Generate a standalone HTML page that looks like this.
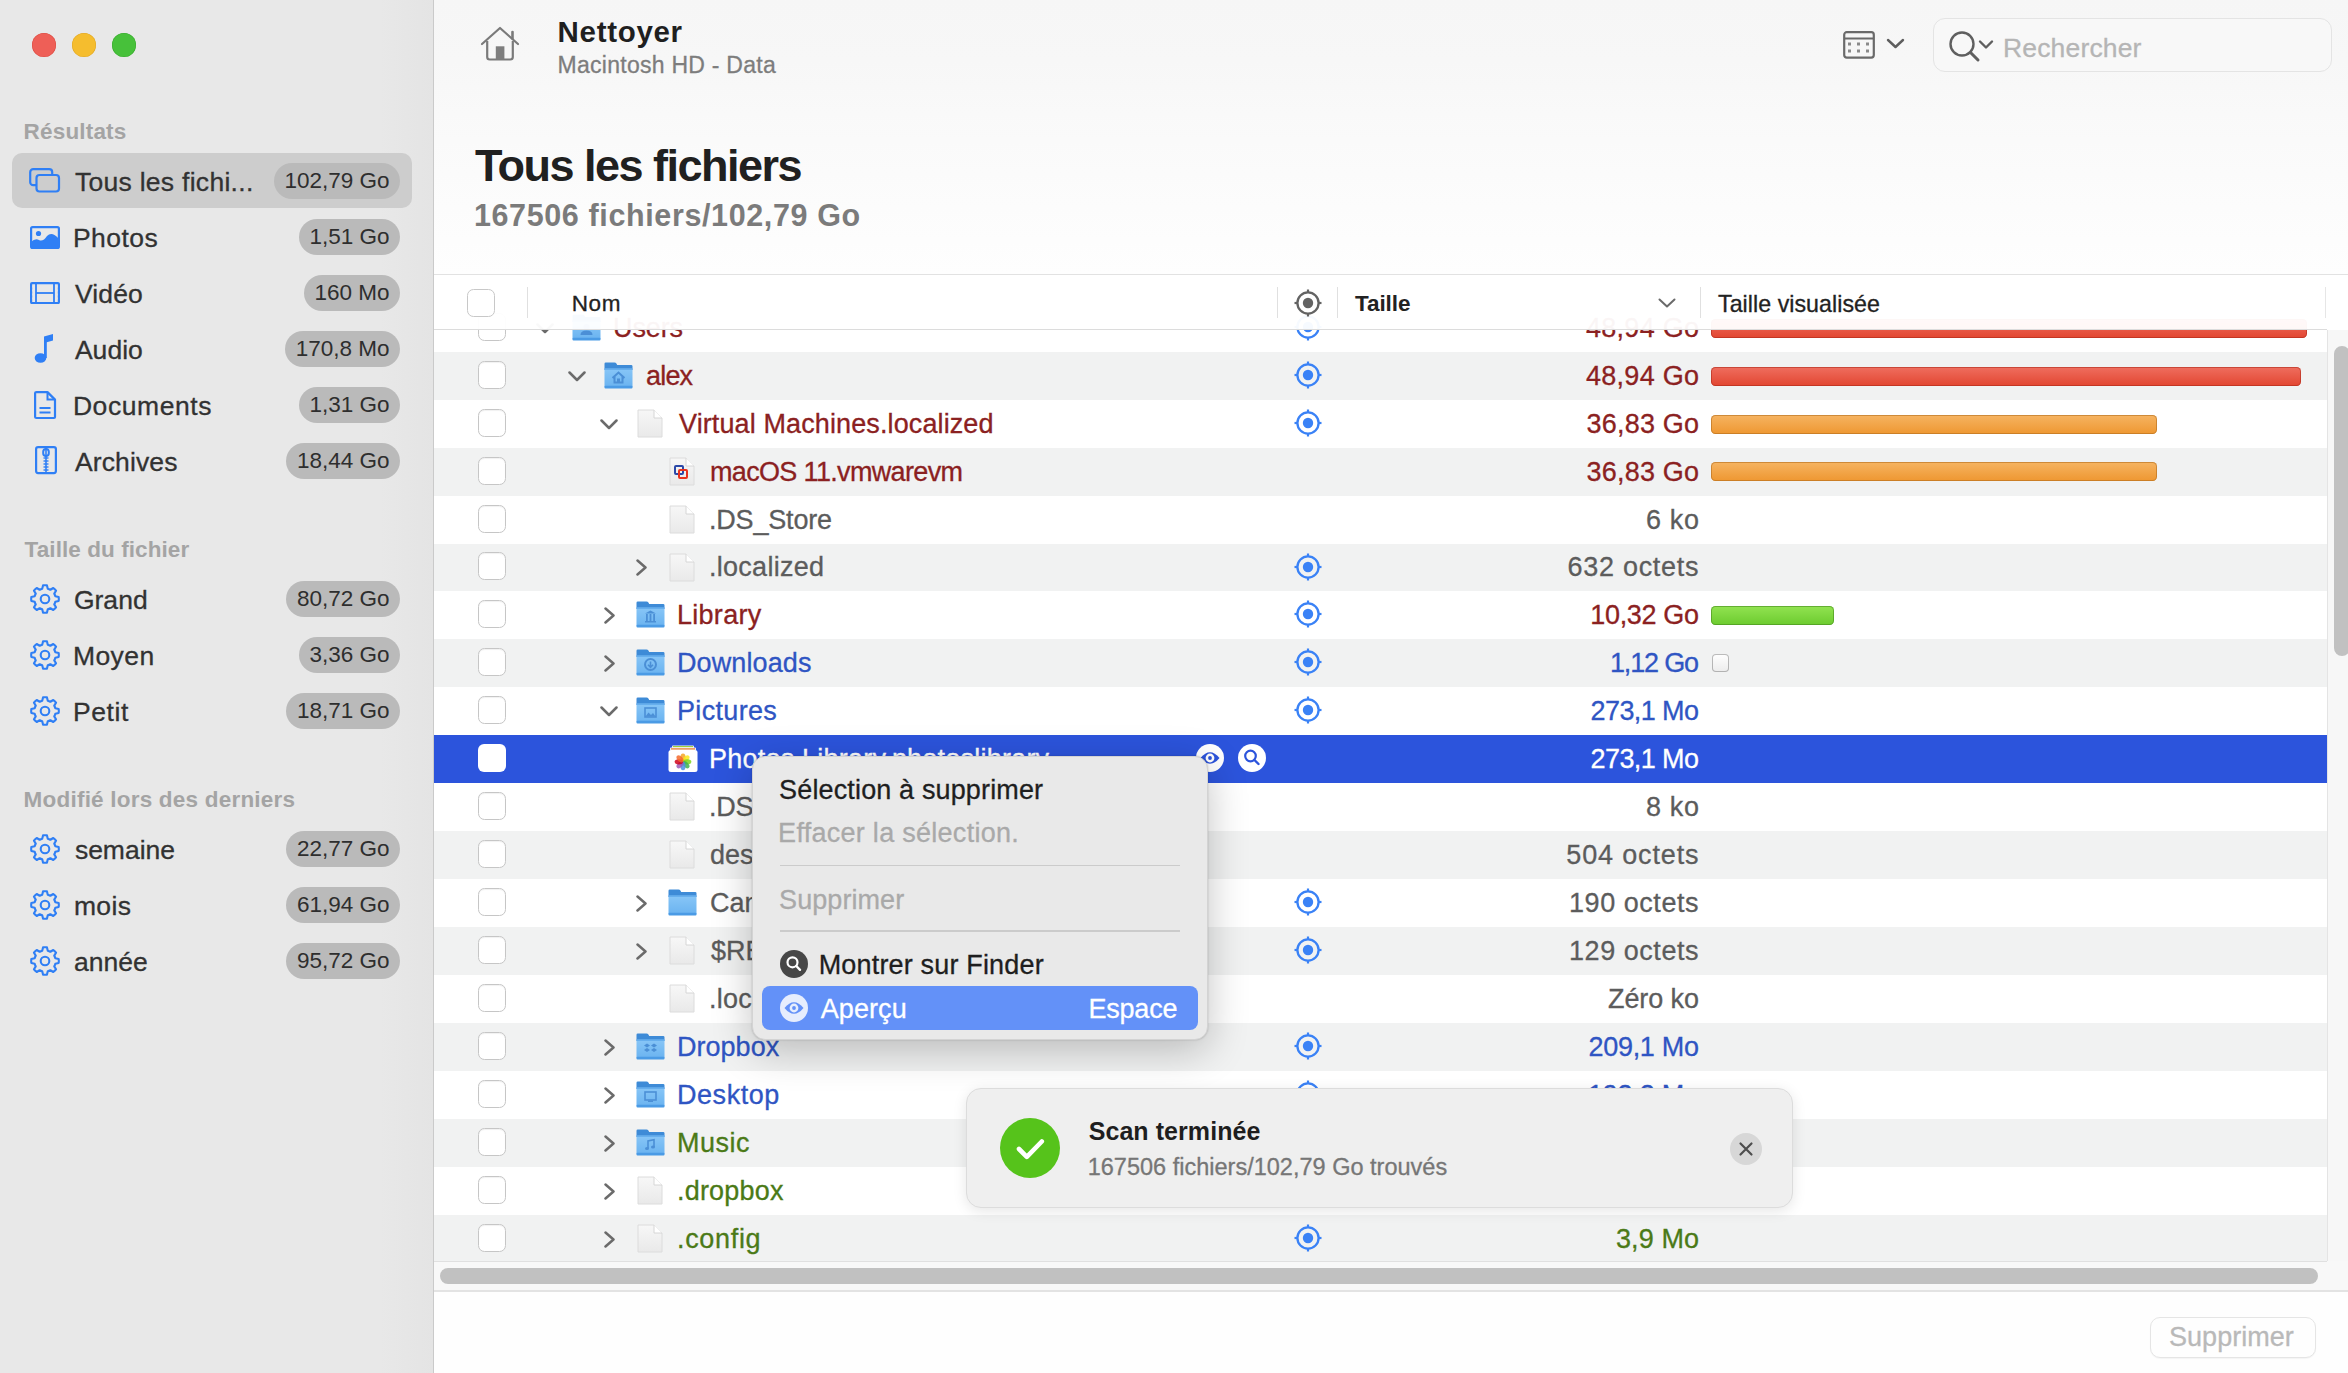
<!DOCTYPE html><html><head><meta charset="utf-8"><style>
html,body{margin:0;padding:0;}
body{width:2348px;height:1373px;overflow:hidden;position:relative;font-family:"Liberation Sans", sans-serif;background:#fff;}
.t{position:absolute;white-space:nowrap;}
</style></head><body>
<div style="position:absolute;left:0px;top:0px;width:433px;height:1373px;background:linear-gradient(to right,#e8e8e8 0,#e8e8e8 380px,#e4e4e4 433px);"></div>
<div style="position:absolute;left:433px;top:0px;width:1px;height:1373px;background:#cacaca;"></div>
<div style="position:absolute;left:32px;top:33px;width:24px;height:24px;border-radius:50%;background:#ee5f57;box-shadow:inset 0 0 0 0.5px #d9493f;"></div>
<div style="position:absolute;left:72px;top:33px;width:24px;height:24px;border-radius:50%;background:#f5bd2e;box-shadow:inset 0 0 0 0.5px #dea424;"></div>
<div style="position:absolute;left:112px;top:33px;width:24px;height:24px;border-radius:50%;background:#47c13a;box-shadow:inset 0 0 0 0.5px #36a72b;"></div>
<div class="t" style="left:23.60px;top:121.15px;font-size:22.5px;line-height:22.5px;color:#a4a4a4;font-weight:700;letter-spacing:0.179px;">Résultats</div>
<div class="t" style="left:24.60px;top:538.95px;font-size:22.5px;line-height:22.5px;color:#a4a4a4;font-weight:700;letter-spacing:0.074px;">Taille du fichier</div>
<div class="t" style="left:23.60px;top:788.85px;font-size:22.5px;line-height:22.5px;color:#a4a4a4;font-weight:700;letter-spacing:0.212px;">Modifié lors des derniers</div>
<div style="position:absolute;left:12px;top:153.4px;width:400px;height:55px;background:#cdcdcd;border-radius:10px;"></div>
<svg style="position:absolute;left:29px;top:168px;" width="32" height="25" viewBox="0 0 32 25"><rect x="1.2" y="1.2" width="22" height="16" rx="3" fill="none" stroke="#2f7ff5" stroke-width="2.2"/><rect x="7.5" y="7" width="22.5" height="16.5" rx="3" fill="#cdcdcd" stroke="#2f7ff5" stroke-width="2.2"/></svg>
<div class="t" style="left:74.90px;top:169.37px;font-size:26.5px;line-height:26.5px;color:#323232;font-weight:400;letter-spacing:0.286px;-webkit-text-stroke:0.3px #323232;">Tous les fichi...</div>
<div class="t" style="right:1948px;top:163px;height:36px;line-height:36px;padding:0 10.5px;border-radius:18px;background:#bababa;font-size:22.5px;color:#2e2e2e;">102,79 Go</div>
<svg style="position:absolute;left:30px;top:226px;" width="30" height="23" viewBox="0 0 30 23"><rect x="1.1" y="1.1" width="27.8" height="20.8" rx="1.5" fill="none" stroke="#2f7ff5" stroke-width="2.2"/><circle cx="8.5" cy="7.5" r="2.6" fill="#2f7ff5"/><path d="M1 22 L1 16 Q5 12 9 14 Q13 16 17 10 Q22 5 29 13 L29 22 Z" fill="#2f7ff5"/></svg>
<div class="t" style="left:72.90px;top:225.37px;font-size:26.5px;line-height:26.5px;color:#323232;font-weight:400;letter-spacing:0.490px;-webkit-text-stroke:0.3px #323232;">Photos</div>
<div class="t" style="right:1948px;top:219px;height:36px;line-height:36px;padding:0 10.5px;border-radius:18px;background:#bababa;font-size:22.5px;color:#2e2e2e;">1,51 Go</div>
<svg style="position:absolute;left:30px;top:282px;" width="30" height="22" viewBox="0 0 30 22"><rect x="1.1" y="1.1" width="27.8" height="20" rx="1" fill="none" stroke="#2f7ff5" stroke-width="2.2"/><line x1="6" y1="1" x2="6" y2="21" stroke="#2f7ff5" stroke-width="1.8"/><line x1="24" y1="1" x2="24" y2="21" stroke="#2f7ff5" stroke-width="1.8"/><line x1="6" y1="11" x2="24" y2="11" stroke="#2f7ff5" stroke-width="1.8"/><rect x="2.4" y="3.5" width="2.2" height="2" fill="#e8e8e8"/><rect x="25.4" y="3.5" width="2.2" height="2" fill="#e8e8e8"/><rect x="2.4" y="7.5" width="2.2" height="2" fill="#e8e8e8"/><rect x="25.4" y="7.5" width="2.2" height="2" fill="#e8e8e8"/><rect x="2.4" y="11.5" width="2.2" height="2" fill="#e8e8e8"/><rect x="25.4" y="11.5" width="2.2" height="2" fill="#e8e8e8"/><rect x="2.4" y="15.5" width="2.2" height="2" fill="#e8e8e8"/><rect x="25.4" y="15.5" width="2.2" height="2" fill="#e8e8e8"/></svg>
<div class="t" style="left:74.90px;top:281.37px;font-size:26.5px;line-height:26.5px;color:#323232;font-weight:400;letter-spacing:0.160px;-webkit-text-stroke:0.3px #323232;">Vidéo</div>
<div class="t" style="right:1948px;top:275px;height:36px;line-height:36px;padding:0 10.5px;border-radius:18px;background:#bababa;font-size:22.5px;color:#2e2e2e;">160 Mo</div>
<svg style="position:absolute;left:34px;top:334px;" width="20" height="30" viewBox="0 0 20 30"><ellipse cx="6.5" cy="24" rx="5.8" ry="4.8" fill="#2f7ff5"/><rect x="10" y="4" width="2.8" height="20" fill="#2f7ff5"/><path d="M10 2.5 L19 0 L19 6.5 L10 9 Z" fill="#2f7ff5"/></svg>
<div class="t" style="left:74.90px;top:337.37px;font-size:26.5px;line-height:26.5px;color:#323232;font-weight:400;letter-spacing:0.040px;-webkit-text-stroke:0.3px #323232;">Audio</div>
<div class="t" style="right:1948px;top:331px;height:36px;line-height:36px;padding:0 10.5px;border-radius:18px;background:#bababa;font-size:22.5px;color:#2e2e2e;">170,8 Mo</div>
<svg style="position:absolute;left:33.5px;top:391px;" width="23" height="29" viewBox="0 0 23 29"><path d="M2.5 1.1 H13.5 L21 8.6 V26 Q21 27 20 27 H2.5 Q1.1 27 1.1 26 V2.1 Q1.1 1.1 2.5 1.1 Z" fill="none" stroke="#2f7ff5" stroke-width="2.2" stroke-linejoin="round"/><path d="M13.5 1.1 V8.6 H21" fill="none" stroke="#2f7ff5" stroke-width="2"/><line x1="5.5" y1="17" x2="16.5" y2="17" stroke="#2f7ff5" stroke-width="2"/><line x1="5.5" y1="21.5" x2="16.5" y2="21.5" stroke="#2f7ff5" stroke-width="2"/></svg>
<div class="t" style="left:72.90px;top:393.37px;font-size:26.5px;line-height:26.5px;color:#323232;font-weight:400;letter-spacing:0.578px;-webkit-text-stroke:0.3px #323232;">Documents</div>
<div class="t" style="right:1948px;top:387px;height:36px;line-height:36px;padding:0 10.5px;border-radius:18px;background:#bababa;font-size:22.5px;color:#2e2e2e;">1,31 Go</div>
<svg style="position:absolute;left:34.5px;top:446px;" width="22" height="29" viewBox="0 0 22 29"><rect x="1.1" y="1.1" width="19.8" height="26" rx="2" fill="none" stroke="#2f7ff5" stroke-width="2.2"/><line x1="11" y1="1" x2="11" y2="26" stroke="#2f7ff5" stroke-width="1.6"/><line x1="8.5" y1="12" x2="13.5" y2="12" stroke="#2f7ff5" stroke-width="1.4"/><line x1="8.5" y1="15" x2="13.5" y2="15" stroke="#2f7ff5" stroke-width="1.4"/><line x1="8.5" y1="18" x2="13.5" y2="18" stroke="#2f7ff5" stroke-width="1.4"/><line x1="8.5" y1="21" x2="13.5" y2="21" stroke="#2f7ff5" stroke-width="1.4"/><line x1="8.5" y1="24" x2="13.5" y2="24" stroke="#2f7ff5" stroke-width="1.4"/><rect x="8.2" y="3" width="5.6" height="7" rx="2.8" fill="none" stroke="#2f7ff5" stroke-width="2"/></svg>
<div class="t" style="left:74.90px;top:449.37px;font-size:26.5px;line-height:26.5px;color:#323232;font-weight:400;letter-spacing:0.134px;-webkit-text-stroke:0.3px #323232;">Archives</div>
<div class="t" style="right:1948px;top:443px;height:36px;line-height:36px;padding:0 10.5px;border-radius:18px;background:#bababa;font-size:22.5px;color:#2e2e2e;">18,44 Go</div>
<svg style="position:absolute;left:30px;top:583.8px;" width="30" height="30" viewBox="0 0 30 30"><path d="M12.23 4.66 L13.08 1.33 A13.8 13.8 0 0 1 16.92 1.33 L17.77 4.66 A10.7 10.7 0 0 1 20.35 5.73 L23.31 3.98 A13.8 13.8 0 0 1 26.02 6.69 L24.27 9.65 A10.7 10.7 0 0 1 25.34 12.23 L28.67 13.08 A13.8 13.8 0 0 1 28.67 16.92 L25.34 17.77 A10.7 10.7 0 0 1 24.27 20.35 L26.02 23.31 A13.8 13.8 0 0 1 23.31 26.02 L20.35 24.27 A10.7 10.7 0 0 1 17.77 25.34 L16.92 28.67 A13.8 13.8 0 0 1 13.08 28.67 L12.23 25.34 A10.7 10.7 0 0 1 9.65 24.27 L6.69 26.02 A13.8 13.8 0 0 1 3.98 23.31 L5.73 20.35 A10.7 10.7 0 0 1 4.66 17.77 L1.33 16.92 A13.8 13.8 0 0 1 1.33 13.08 L4.66 12.23 A10.7 10.7 0 0 1 5.73 9.65 L3.98 6.69 A13.8 13.8 0 0 1 6.69 3.98 L9.65 5.73 A10.7 10.7 0 0 1 12.23 4.66 Z" fill="none" stroke="#2f7ff5" stroke-width="2.1" stroke-linejoin="round"/><circle cx="15" cy="15" r="4.3" fill="none" stroke="#2f7ff5" stroke-width="2.1"/></svg>
<div class="t" style="left:73.90px;top:587.37px;font-size:26.5px;line-height:26.5px;color:#323232;font-weight:400;letter-spacing:0.022px;-webkit-text-stroke:0.3px #323232;">Grand</div>
<div class="t" style="right:1948px;top:581px;height:36px;line-height:36px;padding:0 10.5px;border-radius:18px;background:#bababa;font-size:22.5px;color:#2e2e2e;">80,72 Go</div>
<svg style="position:absolute;left:30px;top:639.8px;" width="30" height="30" viewBox="0 0 30 30"><path d="M12.23 4.66 L13.08 1.33 A13.8 13.8 0 0 1 16.92 1.33 L17.77 4.66 A10.7 10.7 0 0 1 20.35 5.73 L23.31 3.98 A13.8 13.8 0 0 1 26.02 6.69 L24.27 9.65 A10.7 10.7 0 0 1 25.34 12.23 L28.67 13.08 A13.8 13.8 0 0 1 28.67 16.92 L25.34 17.77 A10.7 10.7 0 0 1 24.27 20.35 L26.02 23.31 A13.8 13.8 0 0 1 23.31 26.02 L20.35 24.27 A10.7 10.7 0 0 1 17.77 25.34 L16.92 28.67 A13.8 13.8 0 0 1 13.08 28.67 L12.23 25.34 A10.7 10.7 0 0 1 9.65 24.27 L6.69 26.02 A13.8 13.8 0 0 1 3.98 23.31 L5.73 20.35 A10.7 10.7 0 0 1 4.66 17.77 L1.33 16.92 A13.8 13.8 0 0 1 1.33 13.08 L4.66 12.23 A10.7 10.7 0 0 1 5.73 9.65 L3.98 6.69 A13.8 13.8 0 0 1 6.69 3.98 L9.65 5.73 A10.7 10.7 0 0 1 12.23 4.66 Z" fill="none" stroke="#2f7ff5" stroke-width="2.1" stroke-linejoin="round"/><circle cx="15" cy="15" r="4.3" fill="none" stroke="#2f7ff5" stroke-width="2.1"/></svg>
<div class="t" style="left:72.90px;top:643.37px;font-size:26.5px;line-height:26.5px;color:#323232;font-weight:400;letter-spacing:0.450px;-webkit-text-stroke:0.3px #323232;">Moyen</div>
<div class="t" style="right:1948px;top:637px;height:36px;line-height:36px;padding:0 10.5px;border-radius:18px;background:#bababa;font-size:22.5px;color:#2e2e2e;">3,36 Go</div>
<svg style="position:absolute;left:30px;top:695.8px;" width="30" height="30" viewBox="0 0 30 30"><path d="M12.23 4.66 L13.08 1.33 A13.8 13.8 0 0 1 16.92 1.33 L17.77 4.66 A10.7 10.7 0 0 1 20.35 5.73 L23.31 3.98 A13.8 13.8 0 0 1 26.02 6.69 L24.27 9.65 A10.7 10.7 0 0 1 25.34 12.23 L28.67 13.08 A13.8 13.8 0 0 1 28.67 16.92 L25.34 17.77 A10.7 10.7 0 0 1 24.27 20.35 L26.02 23.31 A13.8 13.8 0 0 1 23.31 26.02 L20.35 24.27 A10.7 10.7 0 0 1 17.77 25.34 L16.92 28.67 A13.8 13.8 0 0 1 13.08 28.67 L12.23 25.34 A10.7 10.7 0 0 1 9.65 24.27 L6.69 26.02 A13.8 13.8 0 0 1 3.98 23.31 L5.73 20.35 A10.7 10.7 0 0 1 4.66 17.77 L1.33 16.92 A13.8 13.8 0 0 1 1.33 13.08 L4.66 12.23 A10.7 10.7 0 0 1 5.73 9.65 L3.98 6.69 A13.8 13.8 0 0 1 6.69 3.98 L9.65 5.73 A10.7 10.7 0 0 1 12.23 4.66 Z" fill="none" stroke="#2f7ff5" stroke-width="2.1" stroke-linejoin="round"/><circle cx="15" cy="15" r="4.3" fill="none" stroke="#2f7ff5" stroke-width="2.1"/></svg>
<div class="t" style="left:72.90px;top:699.37px;font-size:26.5px;line-height:26.5px;color:#323232;font-weight:400;letter-spacing:0.584px;-webkit-text-stroke:0.3px #323232;">Petit</div>
<div class="t" style="right:1948px;top:693px;height:36px;line-height:36px;padding:0 10.5px;border-radius:18px;background:#bababa;font-size:22.5px;color:#2e2e2e;">18,71 Go</div>
<svg style="position:absolute;left:30px;top:833.8px;" width="30" height="30" viewBox="0 0 30 30"><path d="M12.23 4.66 L13.08 1.33 A13.8 13.8 0 0 1 16.92 1.33 L17.77 4.66 A10.7 10.7 0 0 1 20.35 5.73 L23.31 3.98 A13.8 13.8 0 0 1 26.02 6.69 L24.27 9.65 A10.7 10.7 0 0 1 25.34 12.23 L28.67 13.08 A13.8 13.8 0 0 1 28.67 16.92 L25.34 17.77 A10.7 10.7 0 0 1 24.27 20.35 L26.02 23.31 A13.8 13.8 0 0 1 23.31 26.02 L20.35 24.27 A10.7 10.7 0 0 1 17.77 25.34 L16.92 28.67 A13.8 13.8 0 0 1 13.08 28.67 L12.23 25.34 A10.7 10.7 0 0 1 9.65 24.27 L6.69 26.02 A13.8 13.8 0 0 1 3.98 23.31 L5.73 20.35 A10.7 10.7 0 0 1 4.66 17.77 L1.33 16.92 A13.8 13.8 0 0 1 1.33 13.08 L4.66 12.23 A10.7 10.7 0 0 1 5.73 9.65 L3.98 6.69 A13.8 13.8 0 0 1 6.69 3.98 L9.65 5.73 A10.7 10.7 0 0 1 12.23 4.66 Z" fill="none" stroke="#2f7ff5" stroke-width="2.1" stroke-linejoin="round"/><circle cx="15" cy="15" r="4.3" fill="none" stroke="#2f7ff5" stroke-width="2.1"/></svg>
<div class="t" style="left:74.90px;top:837.37px;font-size:26.5px;line-height:26.5px;color:#323232;font-weight:400;letter-spacing:-0.004px;-webkit-text-stroke:0.3px #323232;">semaine</div>
<div class="t" style="right:1948px;top:831px;height:36px;line-height:36px;padding:0 10.5px;border-radius:18px;background:#bababa;font-size:22.5px;color:#2e2e2e;">22,77 Go</div>
<svg style="position:absolute;left:30px;top:889.8px;" width="30" height="30" viewBox="0 0 30 30"><path d="M12.23 4.66 L13.08 1.33 A13.8 13.8 0 0 1 16.92 1.33 L17.77 4.66 A10.7 10.7 0 0 1 20.35 5.73 L23.31 3.98 A13.8 13.8 0 0 1 26.02 6.69 L24.27 9.65 A10.7 10.7 0 0 1 25.34 12.23 L28.67 13.08 A13.8 13.8 0 0 1 28.67 16.92 L25.34 17.77 A10.7 10.7 0 0 1 24.27 20.35 L26.02 23.31 A13.8 13.8 0 0 1 23.31 26.02 L20.35 24.27 A10.7 10.7 0 0 1 17.77 25.34 L16.92 28.67 A13.8 13.8 0 0 1 13.08 28.67 L12.23 25.34 A10.7 10.7 0 0 1 9.65 24.27 L6.69 26.02 A13.8 13.8 0 0 1 3.98 23.31 L5.73 20.35 A10.7 10.7 0 0 1 4.66 17.77 L1.33 16.92 A13.8 13.8 0 0 1 1.33 13.08 L4.66 12.23 A10.7 10.7 0 0 1 5.73 9.65 L3.98 6.69 A13.8 13.8 0 0 1 6.69 3.98 L9.65 5.73 A10.7 10.7 0 0 1 12.23 4.66 Z" fill="none" stroke="#2f7ff5" stroke-width="2.1" stroke-linejoin="round"/><circle cx="15" cy="15" r="4.3" fill="none" stroke="#2f7ff5" stroke-width="2.1"/></svg>
<div class="t" style="left:73.90px;top:893.37px;font-size:26.5px;line-height:26.5px;color:#323232;font-weight:400;letter-spacing:0.400px;-webkit-text-stroke:0.3px #323232;">mois</div>
<div class="t" style="right:1948px;top:887px;height:36px;line-height:36px;padding:0 10.5px;border-radius:18px;background:#bababa;font-size:22.5px;color:#2e2e2e;">61,94 Go</div>
<svg style="position:absolute;left:30px;top:945.8px;" width="30" height="30" viewBox="0 0 30 30"><path d="M12.23 4.66 L13.08 1.33 A13.8 13.8 0 0 1 16.92 1.33 L17.77 4.66 A10.7 10.7 0 0 1 20.35 5.73 L23.31 3.98 A13.8 13.8 0 0 1 26.02 6.69 L24.27 9.65 A10.7 10.7 0 0 1 25.34 12.23 L28.67 13.08 A13.8 13.8 0 0 1 28.67 16.92 L25.34 17.77 A10.7 10.7 0 0 1 24.27 20.35 L26.02 23.31 A13.8 13.8 0 0 1 23.31 26.02 L20.35 24.27 A10.7 10.7 0 0 1 17.77 25.34 L16.92 28.67 A13.8 13.8 0 0 1 13.08 28.67 L12.23 25.34 A10.7 10.7 0 0 1 9.65 24.27 L6.69 26.02 A13.8 13.8 0 0 1 3.98 23.31 L5.73 20.35 A10.7 10.7 0 0 1 4.66 17.77 L1.33 16.92 A13.8 13.8 0 0 1 1.33 13.08 L4.66 12.23 A10.7 10.7 0 0 1 5.73 9.65 L3.98 6.69 A13.8 13.8 0 0 1 6.69 3.98 L9.65 5.73 A10.7 10.7 0 0 1 12.23 4.66 Z" fill="none" stroke="#2f7ff5" stroke-width="2.1" stroke-linejoin="round"/><circle cx="15" cy="15" r="4.3" fill="none" stroke="#2f7ff5" stroke-width="2.1"/></svg>
<div class="t" style="left:73.90px;top:949.37px;font-size:26.5px;line-height:26.5px;color:#323232;font-weight:400;letter-spacing:0.012px;-webkit-text-stroke:0.3px #323232;">année</div>
<div class="t" style="right:1948px;top:943px;height:36px;line-height:36px;padding:0 10.5px;border-radius:18px;background:#bababa;font-size:22.5px;color:#2e2e2e;">95,72 Go</div>
<div style="position:absolute;left:434px;top:0px;width:1914px;height:274px;background:linear-gradient(to bottom,#f6f6f6 0,#f7f7f7 60px,#fafafa 140px,#fefefe 274px);"></div>
<svg style="position:absolute;left:478px;top:24px;" width="44" height="40" viewBox="0 0 44 40"><path d="M4 20 L22 4 L40 20" fill="none" stroke="#7a7a7a" stroke-width="2.2" stroke-linecap="round" stroke-linejoin="round"/><path d="M34.5 14.5 V8" stroke="#7a7a7a" stroke-width="2.6" stroke-linecap="round"/><path d="M9.2 17 V33 Q9.2 35.5 11.7 35.5 H32.3 Q34.8 35.5 34.8 33 V17" fill="none" stroke="#7a7a7a" stroke-width="2.2" stroke-linejoin="round"/><rect x="17.8" y="22.3" width="8.6" height="13.2" fill="#7e7e7e"/></svg>
<div class="t" style="left:557.60px;top:17.33px;font-size:29.5px;line-height:29.5px;color:#1f1f1f;font-weight:700;letter-spacing:0.687px;">Nettoyer</div>
<div class="t" style="left:557.60px;top:54.33px;font-size:23px;line-height:23px;color:#7d7d7d;font-weight:400;letter-spacing:0.257px;-webkit-text-stroke:0.3px #7d7d7d;">Macintosh HD - Data</div>
<svg style="position:absolute;left:1843px;top:31px;" width="34" height="28" viewBox="0 0 34 28"><rect x="1.2" y="1.2" width="29.6" height="25.4" rx="2.5" fill="none" stroke="#6a6a6a" stroke-width="2.2"/><line x1="1" y1="7.5" x2="31" y2="7.5" stroke="#6a6a6a" stroke-width="2"/><rect x="5" y="11.5" width="3" height="3" fill="#8a8a8a"/><rect x="5" y="18.5" width="3" height="3" fill="#8a8a8a"/><rect x="14" y="11.5" width="3" height="3" fill="#8a8a8a"/><rect x="14" y="18.5" width="3" height="3" fill="#8a8a8a"/><rect x="23" y="11.5" width="3" height="3" fill="#8a8a8a"/><rect x="23" y="18.5" width="3" height="3" fill="#8a8a8a"/></svg>
<svg style="position:absolute;left:1886px;top:38px;" width="20" height="12" viewBox="0 0 20 12"><path d="M2 2 L9.5 9 L17 2" fill="none" stroke="#5e5e5e" stroke-width="2.4" stroke-linecap="round" stroke-linejoin="round"/></svg>
<div style="position:absolute;left:1932.5px;top:17.5px;width:399px;height:54.5px;box-sizing:border-box;border:1.5px solid #e4e4e4;border-radius:12px;background:#f8f8f8;"></div>
<svg style="position:absolute;left:1946px;top:29px;" width="50" height="34" viewBox="0 0 50 34"><circle cx="16" cy="15" r="11.5" fill="none" stroke="#5f5f5f" stroke-width="2.4"/><line x1="24.5" y1="23.5" x2="32" y2="31" stroke="#5f5f5f" stroke-width="3" stroke-linecap="round"/><path d="M34 12.5 L40 18.5 L46 12.5" fill="none" stroke="#5f5f5f" stroke-width="2.4" stroke-linecap="round" stroke-linejoin="round"/></svg>
<div class="t" style="left:2003.00px;top:35.37px;font-size:26.5px;line-height:26.5px;color:#b5b5b5;font-weight:400;letter-spacing:0.161px;-webkit-text-stroke:0.3px #b5b5b5;">Rechercher</div>
<div class="t" style="left:474.90px;top:142.51px;font-size:45px;line-height:45px;color:#202020;font-weight:700;letter-spacing:-1.516px;">Tous les fichiers</div>
<div class="t" style="left:473.90px;top:199.68px;font-size:30.5px;line-height:30.5px;color:#7b7b7b;font-weight:700;letter-spacing:0.625px;">167506 fichiers/102,79 Go</div>
<div style="position:absolute;left:434px;top:275px;width:1893px;height:986px;overflow:hidden;">
<div style="position:absolute;left:0px;top:29.30000000000001px;width:1893px;height:48.09999999999998px;background:#ffffff;"></div>
<div style="position:absolute;left:44px;top:38.0px;width:28px;height:28px;box-sizing:border-box;border:1.2px solid #c6c6c6;border-radius:6.5px;background:#fff;box-shadow:inset 0 1px 1px rgba(0,0,0,0.06);"></div>
<svg style="position:absolute;left:101.5px;top:47.80000000000001px;" width="18" height="11" viewBox="0 0 18 11"><path d="M1.5 1.5 L9 9 L16.5 1.5" fill="none" stroke="#6b6b6b" stroke-width="2.5" stroke-linecap="round" stroke-linejoin="round"/></svg>
<svg style="position:absolute;left:138px;top:39.0px;" width="29" height="27" viewBox="0 0 29 27"><defs><linearGradient id="fg1" x1="0" y1="0" x2="0" y2="1"><stop offset="0" stop-color="#88c6f7"/><stop offset="1" stop-color="#6ab3f0"/></linearGradient></defs><path d="M0.5 4 V1.8 Q0.5 0.5 1.8 0.5 H10.5 Q11.8 0.5 12.4 1.6 L13.2 3 H27.2 Q28.5 3 28.5 4.3 V8 H0.5 Z" fill="#3e8bd7"/><rect x="0.5" y="6.5" width="28" height="19" rx="1" fill="url(#fg1)"/><rect x="0.5" y="6.5" width="28" height="1.2" fill="#5aa5ea"/><rect x="0.5" y="23.8" width="28" height="2.7" rx="1" fill="#4b9be5"/><circle cx="14.5" cy="13" r="3" fill="#4b8fd6"/><path d="M8.5 21 Q8.5 16.5 14.5 16.5 Q20.5 16.5 20.5 21 Z" fill="#4b8fd6"/></svg>
<div class="t" style="left:179.00px;top:40.04px;font-size:27px;line-height:27px;color:#8b2121;font-weight:400;letter-spacing:-0.101px;-webkit-text-stroke:0.3px #8b2121;">Users</div>
<svg style="position:absolute;left:858.7px;top:37.10000000000002px;" width="30" height="30" viewBox="0 0 30 30"><circle cx="15" cy="15" r="10.6" fill="none" stroke="#3a82f6" stroke-width="2.3"/><circle cx="15" cy="15" r="5.2" fill="#3a82f6"/><line x1="15" y1="1.5" x2="15" y2="4.5" stroke="#3a82f6" stroke-width="2.2"/><line x1="15" y1="25.5" x2="15" y2="28.5" stroke="#3a82f6" stroke-width="2.2"/><line x1="1.5" y1="15" x2="4.5" y2="15" stroke="#3a82f6" stroke-width="2.2"/><line x1="25.5" y1="15" x2="28.5" y2="15" stroke="#3a82f6" stroke-width="2.2"/></svg>
<div class="t" style="right:627.71px;text-align:right;top:40.04px;font-size:27px;line-height:27px;color:#8b2121;font-weight:400;letter-spacing:0.276px;-webkit-text-stroke:0.3px #8b2121;">48,94 Go</div>
<div style="position:absolute;left:1277px;top:43.69999999999999px;width:596px;height:19px;border-radius:4.5px;background:linear-gradient(to bottom,#ef6e5f,#e24631);box-shadow:inset 0 0 0 1px rgba(170,40,25,0.55);"></div>
<div style="position:absolute;left:0px;top:77.19999999999999px;width:1893px;height:48.13333333333334px;background:#f1f2f2;"></div>
<div style="position:absolute;left:44px;top:85.89999999999998px;width:28px;height:28px;box-sizing:border-box;border:1.2px solid #c6c6c6;border-radius:6.5px;background:#fff;box-shadow:inset 0 1px 1px rgba(0,0,0,0.06);"></div>
<svg style="position:absolute;left:133.5px;top:95.69999999999999px;" width="18" height="11" viewBox="0 0 18 11"><path d="M1.5 1.5 L9 9 L16.5 1.5" fill="none" stroke="#6b6b6b" stroke-width="2.5" stroke-linecap="round" stroke-linejoin="round"/></svg>
<svg style="position:absolute;left:170px;top:86.89999999999998px;" width="29" height="27" viewBox="0 0 29 27"><defs><linearGradient id="fg2" x1="0" y1="0" x2="0" y2="1"><stop offset="0" stop-color="#88c6f7"/><stop offset="1" stop-color="#6ab3f0"/></linearGradient></defs><path d="M0.5 4 V1.8 Q0.5 0.5 1.8 0.5 H10.5 Q11.8 0.5 12.4 1.6 L13.2 3 H27.2 Q28.5 3 28.5 4.3 V8 H0.5 Z" fill="#3e8bd7"/><rect x="0.5" y="6.5" width="28" height="19" rx="1" fill="url(#fg2)"/><rect x="0.5" y="6.5" width="28" height="1.2" fill="#5aa5ea"/><rect x="0.5" y="23.8" width="28" height="2.7" rx="1" fill="#4b9be5"/><path d="M8.5 16 L14.5 10.5 L20.5 16 M10.5 14.5 V20.5 H18.5 V14.5" fill="none" stroke="#4b8fd6" stroke-width="2"/><rect x="13" y="16.5" width="3" height="4" fill="#4b8fd6"/></svg>
<div class="t" style="left:212.00px;top:87.94px;font-size:27px;line-height:27px;color:#8b2121;font-weight:400;letter-spacing:-0.810px;-webkit-text-stroke:0.3px #8b2121;">alex</div>
<svg style="position:absolute;left:858.7px;top:85.0px;" width="30" height="30" viewBox="0 0 30 30"><circle cx="15" cy="15" r="10.6" fill="none" stroke="#3a82f6" stroke-width="2.3"/><circle cx="15" cy="15" r="5.2" fill="#3a82f6"/><line x1="15" y1="1.5" x2="15" y2="4.5" stroke="#3a82f6" stroke-width="2.2"/><line x1="15" y1="25.5" x2="15" y2="28.5" stroke="#3a82f6" stroke-width="2.2"/><line x1="1.5" y1="15" x2="4.5" y2="15" stroke="#3a82f6" stroke-width="2.2"/><line x1="25.5" y1="15" x2="28.5" y2="15" stroke="#3a82f6" stroke-width="2.2"/></svg>
<div class="t" style="right:627.71px;text-align:right;top:87.94px;font-size:27px;line-height:27px;color:#8b2121;font-weight:400;letter-spacing:0.276px;-webkit-text-stroke:0.3px #8b2121;">48,94 Go</div>
<div style="position:absolute;left:1277px;top:91.59999999999997px;width:590px;height:19px;border-radius:4.5px;background:linear-gradient(to bottom,#ef6e5f,#e24631);box-shadow:inset 0 0 0 1px rgba(170,40,25,0.55);"></div>
<div style="position:absolute;left:0px;top:125.13333333333333px;width:1893px;height:48.13333333333334px;background:#ffffff;"></div>
<div style="position:absolute;left:44px;top:133.83333333333331px;width:28px;height:28px;box-sizing:border-box;border:1.2px solid #c6c6c6;border-radius:6.5px;background:#fff;box-shadow:inset 0 1px 1px rgba(0,0,0,0.06);"></div>
<svg style="position:absolute;left:165.5px;top:143.63333333333333px;" width="18" height="11" viewBox="0 0 18 11"><path d="M1.5 1.5 L9 9 L16.5 1.5" fill="none" stroke="#6b6b6b" stroke-width="2.5" stroke-linecap="round" stroke-linejoin="round"/></svg>
<svg style="position:absolute;left:203px;top:134.0333333333333px;" width="26" height="29" viewBox="0 0 26 29"><defs><linearGradient id="dg" x1="0" y1="0" x2="0" y2="1"><stop offset="0" stop-color="#f7f7f7"/><stop offset="1" stop-color="#e9e9e9"/></linearGradient></defs><path d="M1 1 H17 L25 9 V28 H1 Z" fill="url(#dg)" stroke="#dcdcdc" stroke-width="1"/><path d="M17 1 V9 H25" fill="#ffffff" stroke="#d6d6d6" stroke-width="1"/></svg>
<div class="t" style="left:245.00px;top:135.88px;font-size:27px;line-height:27px;color:#8b2121;font-weight:400;letter-spacing:0.114px;-webkit-text-stroke:0.3px #8b2121;">Virtual Machines.localized</div>
<svg style="position:absolute;left:858.7px;top:132.93333333333334px;" width="30" height="30" viewBox="0 0 30 30"><circle cx="15" cy="15" r="10.6" fill="none" stroke="#3a82f6" stroke-width="2.3"/><circle cx="15" cy="15" r="5.2" fill="#3a82f6"/><line x1="15" y1="1.5" x2="15" y2="4.5" stroke="#3a82f6" stroke-width="2.2"/><line x1="15" y1="25.5" x2="15" y2="28.5" stroke="#3a82f6" stroke-width="2.2"/><line x1="1.5" y1="15" x2="4.5" y2="15" stroke="#3a82f6" stroke-width="2.2"/><line x1="25.5" y1="15" x2="28.5" y2="15" stroke="#3a82f6" stroke-width="2.2"/></svg>
<div class="t" style="right:627.78px;text-align:right;top:135.88px;font-size:27px;line-height:27px;color:#8b2121;font-weight:400;letter-spacing:0.204px;-webkit-text-stroke:0.3px #8b2121;">36,83 Go</div>
<div style="position:absolute;left:1277px;top:139.5333333333333px;width:446px;height:19px;border-radius:4.5px;background:linear-gradient(to bottom,#f6b462,#ee9731);box-shadow:inset 0 0 0 1px rgba(180,110,30,0.6);"></div>
<div style="position:absolute;left:0px;top:173.06666666666666px;width:1893px;height:48.13333333333334px;background:#f1f2f2;"></div>
<div style="position:absolute;left:44px;top:181.76666666666665px;width:28px;height:28px;box-sizing:border-box;border:1.2px solid #c6c6c6;border-radius:6.5px;background:#fff;box-shadow:inset 0 1px 1px rgba(0,0,0,0.06);"></div>
<svg style="position:absolute;left:235px;top:181.96666666666664px;" width="26" height="29" viewBox="0 0 26 29"><defs><linearGradient id="dg" x1="0" y1="0" x2="0" y2="1"><stop offset="0" stop-color="#f7f7f7"/><stop offset="1" stop-color="#e9e9e9"/></linearGradient></defs><path d="M1 1 H17 L25 9 V28 H1 Z" fill="url(#dg)" stroke="#dcdcdc" stroke-width="1"/><path d="M17 1 V9 H25" fill="#ffffff" stroke="#d6d6d6" stroke-width="1"/><rect x="6" y="9" width="8" height="8" rx="1" fill="none" stroke="#2b48a8" stroke-width="2"/><rect x="10" y="13" width="8" height="8" rx="1" fill="none" stroke="#e8321e" stroke-width="2"/></svg>
<div class="t" style="left:276.00px;top:183.81px;font-size:27px;line-height:27px;color:#8b2121;font-weight:400;letter-spacing:-0.660px;-webkit-text-stroke:0.3px #8b2121;">macOS 11.vmwarevm</div>
<div class="t" style="right:627.78px;text-align:right;top:183.81px;font-size:27px;line-height:27px;color:#8b2121;font-weight:400;letter-spacing:0.204px;-webkit-text-stroke:0.3px #8b2121;">36,83 Go</div>
<div style="position:absolute;left:1277px;top:187.46666666666664px;width:446px;height:19px;border-radius:4.5px;background:linear-gradient(to bottom,#f6b462,#ee9731);box-shadow:inset 0 0 0 1px rgba(180,110,30,0.6);"></div>
<div style="position:absolute;left:0px;top:221.0px;width:1893px;height:47.925000000000026px;background:#ffffff;"></div>
<div style="position:absolute;left:44px;top:229.7px;width:28px;height:28px;box-sizing:border-box;border:1.2px solid #c6c6c6;border-radius:6.5px;background:#fff;box-shadow:inset 0 1px 1px rgba(0,0,0,0.06);"></div>
<svg style="position:absolute;left:235px;top:229.89999999999998px;" width="26" height="29" viewBox="0 0 26 29"><defs><linearGradient id="dg" x1="0" y1="0" x2="0" y2="1"><stop offset="0" stop-color="#f7f7f7"/><stop offset="1" stop-color="#e9e9e9"/></linearGradient></defs><path d="M1 1 H17 L25 9 V28 H1 Z" fill="url(#dg)" stroke="#dcdcdc" stroke-width="1"/><path d="M17 1 V9 H25" fill="#ffffff" stroke="#d6d6d6" stroke-width="1"/></svg>
<div class="t" style="left:275.00px;top:231.74px;font-size:27px;line-height:27px;color:#5c5c5c;font-weight:400;letter-spacing:-0.193px;-webkit-text-stroke:0.3px #5c5c5c;">.DS_Store</div>
<div class="t" style="right:627.32px;text-align:right;top:231.74px;font-size:27px;line-height:27px;color:#5c5c5c;font-weight:400;letter-spacing:0.661px;-webkit-text-stroke:0.3px #5c5c5c;">6 ko</div>
<div style="position:absolute;left:0px;top:268.725px;width:1893px;height:47.925000000000026px;background:#f1f2f2;"></div>
<div style="position:absolute;left:44px;top:277.42500000000007px;width:28px;height:28px;box-sizing:border-box;border:1.2px solid #c6c6c6;border-radius:6.5px;background:#fff;box-shadow:inset 0 1px 1px rgba(0,0,0,0.06);"></div>
<svg style="position:absolute;left:202px;top:284.225px;" width="12" height="18" viewBox="0 0 12 18"><path d="M1.5 1.5 L9.5 8.5 L1.5 15.5" fill="none" stroke="#6b6b6b" stroke-width="2.5" stroke-linecap="round" stroke-linejoin="round"/></svg>
<svg style="position:absolute;left:235px;top:277.625px;" width="26" height="29" viewBox="0 0 26 29"><defs><linearGradient id="dg" x1="0" y1="0" x2="0" y2="1"><stop offset="0" stop-color="#f7f7f7"/><stop offset="1" stop-color="#e9e9e9"/></linearGradient></defs><path d="M1 1 H17 L25 9 V28 H1 Z" fill="url(#dg)" stroke="#dcdcdc" stroke-width="1"/><path d="M17 1 V9 H25" fill="#ffffff" stroke="#d6d6d6" stroke-width="1"/></svg>
<div class="t" style="left:275.00px;top:279.47px;font-size:27px;line-height:27px;color:#5c5c5c;font-weight:400;letter-spacing:0.273px;-webkit-text-stroke:0.3px #5c5c5c;">.localized</div>
<svg style="position:absolute;left:858.7px;top:276.525px;" width="30" height="30" viewBox="0 0 30 30"><circle cx="15" cy="15" r="10.6" fill="none" stroke="#3a82f6" stroke-width="2.3"/><circle cx="15" cy="15" r="5.2" fill="#3a82f6"/><line x1="15" y1="1.5" x2="15" y2="4.5" stroke="#3a82f6" stroke-width="2.2"/><line x1="15" y1="25.5" x2="15" y2="28.5" stroke="#3a82f6" stroke-width="2.2"/><line x1="1.5" y1="15" x2="4.5" y2="15" stroke="#3a82f6" stroke-width="2.2"/><line x1="25.5" y1="15" x2="28.5" y2="15" stroke="#3a82f6" stroke-width="2.2"/></svg>
<div class="t" style="right:627.79px;text-align:right;top:279.47px;font-size:27px;line-height:27px;color:#5c5c5c;font-weight:400;letter-spacing:0.713px;-webkit-text-stroke:0.3px #5c5c5c;">632 octets</div>
<div style="position:absolute;left:0px;top:316.45000000000005px;width:1893px;height:48.075px;background:#ffffff;"></div>
<div style="position:absolute;left:44px;top:325.1500000000001px;width:28px;height:28px;box-sizing:border-box;border:1.2px solid #c6c6c6;border-radius:6.5px;background:#fff;box-shadow:inset 0 1px 1px rgba(0,0,0,0.06);"></div>
<svg style="position:absolute;left:170px;top:331.95000000000005px;" width="12" height="18" viewBox="0 0 12 18"><path d="M1.5 1.5 L9.5 8.5 L1.5 15.5" fill="none" stroke="#6b6b6b" stroke-width="2.5" stroke-linecap="round" stroke-linejoin="round"/></svg>
<svg style="position:absolute;left:202px;top:326.1500000000001px;" width="29" height="27" viewBox="0 0 29 27"><defs><linearGradient id="fg3" x1="0" y1="0" x2="0" y2="1"><stop offset="0" stop-color="#88c6f7"/><stop offset="1" stop-color="#6ab3f0"/></linearGradient></defs><path d="M0.5 4 V1.8 Q0.5 0.5 1.8 0.5 H10.5 Q11.8 0.5 12.4 1.6 L13.2 3 H27.2 Q28.5 3 28.5 4.3 V8 H0.5 Z" fill="#3e8bd7"/><rect x="0.5" y="6.5" width="28" height="19" rx="1" fill="url(#fg3)"/><rect x="0.5" y="6.5" width="28" height="1.2" fill="#5aa5ea"/><rect x="0.5" y="23.8" width="28" height="2.7" rx="1" fill="#4b9be5"/><path d="M9 12.5 L14.5 9.5 L20 12.5 Z" fill="#4b8fd6"/><rect x="10" y="13" width="1.8" height="7" fill="#4b8fd6"/><rect x="13.6" y="13" width="1.8" height="7" fill="#4b8fd6"/><rect x="17.2" y="13" width="1.8" height="7" fill="#4b8fd6"/><rect x="9" y="20" width="11" height="1.5" fill="#4b8fd6"/></svg>
<div class="t" style="left:243.00px;top:327.19px;font-size:27px;line-height:27px;color:#8b2121;font-weight:400;letter-spacing:0.278px;-webkit-text-stroke:0.3px #8b2121;">Library</div>
<svg style="position:absolute;left:858.7px;top:324.25px;" width="30" height="30" viewBox="0 0 30 30"><circle cx="15" cy="15" r="10.6" fill="none" stroke="#3a82f6" stroke-width="2.3"/><circle cx="15" cy="15" r="5.2" fill="#3a82f6"/><line x1="15" y1="1.5" x2="15" y2="4.5" stroke="#3a82f6" stroke-width="2.2"/><line x1="15" y1="25.5" x2="15" y2="28.5" stroke="#3a82f6" stroke-width="2.2"/><line x1="1.5" y1="15" x2="4.5" y2="15" stroke="#3a82f6" stroke-width="2.2"/><line x1="25.5" y1="15" x2="28.5" y2="15" stroke="#3a82f6" stroke-width="2.2"/></svg>
<div class="t" style="right:628.32px;text-align:right;top:327.19px;font-size:27px;line-height:27px;color:#8b2121;font-weight:400;letter-spacing:-0.338px;-webkit-text-stroke:0.3px #8b2121;">10,32 Go</div>
<div style="position:absolute;left:1277px;top:330.85px;width:123px;height:19px;border-radius:4.5px;background:linear-gradient(to bottom,#92e351,#6ccb2f);box-shadow:inset 0 0 0 1px rgba(70,140,30,0.6);"></div>
<div style="position:absolute;left:0px;top:364.32500000000005px;width:1893px;height:48.075px;background:#f1f2f2;"></div>
<div style="position:absolute;left:44px;top:373.0250000000001px;width:28px;height:28px;box-sizing:border-box;border:1.2px solid #c6c6c6;border-radius:6.5px;background:#fff;box-shadow:inset 0 1px 1px rgba(0,0,0,0.06);"></div>
<svg style="position:absolute;left:170px;top:379.82500000000005px;" width="12" height="18" viewBox="0 0 12 18"><path d="M1.5 1.5 L9.5 8.5 L1.5 15.5" fill="none" stroke="#6b6b6b" stroke-width="2.5" stroke-linecap="round" stroke-linejoin="round"/></svg>
<svg style="position:absolute;left:202px;top:374.0250000000001px;" width="29" height="27" viewBox="0 0 29 27"><defs><linearGradient id="fg4" x1="0" y1="0" x2="0" y2="1"><stop offset="0" stop-color="#88c6f7"/><stop offset="1" stop-color="#6ab3f0"/></linearGradient></defs><path d="M0.5 4 V1.8 Q0.5 0.5 1.8 0.5 H10.5 Q11.8 0.5 12.4 1.6 L13.2 3 H27.2 Q28.5 3 28.5 4.3 V8 H0.5 Z" fill="#3e8bd7"/><rect x="0.5" y="6.5" width="28" height="19" rx="1" fill="url(#fg4)"/><rect x="0.5" y="6.5" width="28" height="1.2" fill="#5aa5ea"/><rect x="0.5" y="23.8" width="28" height="2.7" rx="1" fill="#4b9be5"/><circle cx="14.5" cy="15.5" r="5.5" fill="none" stroke="#4b8fd6" stroke-width="2"/><path d="M14.5 12.5 V18 M12 15.8 L14.5 18.3 L17 15.8" fill="none" stroke="#4b8fd6" stroke-width="1.6"/></svg>
<div class="t" style="left:243.00px;top:375.07px;font-size:27px;line-height:27px;color:#2f55c3;font-weight:400;letter-spacing:0.115px;-webkit-text-stroke:0.3px #2f55c3;">Downloads</div>
<svg style="position:absolute;left:858.7px;top:372.125px;" width="30" height="30" viewBox="0 0 30 30"><circle cx="15" cy="15" r="10.6" fill="none" stroke="#3a82f6" stroke-width="2.3"/><circle cx="15" cy="15" r="5.2" fill="#3a82f6"/><line x1="15" y1="1.5" x2="15" y2="4.5" stroke="#3a82f6" stroke-width="2.2"/><line x1="15" y1="25.5" x2="15" y2="28.5" stroke="#3a82f6" stroke-width="2.2"/><line x1="1.5" y1="15" x2="4.5" y2="15" stroke="#3a82f6" stroke-width="2.2"/><line x1="25.5" y1="15" x2="28.5" y2="15" stroke="#3a82f6" stroke-width="2.2"/></svg>
<div class="t" style="right:629.16px;text-align:right;top:375.07px;font-size:27px;line-height:27px;color:#2f55c3;font-weight:400;letter-spacing:-1.175px;-webkit-text-stroke:0.3px #2f55c3;">1,12 Go</div>
<div style="position:absolute;left:1277.5px;top:379.32500000000005px;width:17.5px;height:18px;border-radius:4px;background:linear-gradient(to bottom,#ffffff,#ececec);box-shadow:inset 0 0 0 1px rgba(120,120,120,0.5);"></div>
<div style="position:absolute;left:0px;top:412.20000000000005px;width:1893px;height:47.99999999999996px;background:#ffffff;"></div>
<div style="position:absolute;left:44px;top:420.9000000000001px;width:28px;height:28px;box-sizing:border-box;border:1.2px solid #c6c6c6;border-radius:6.5px;background:#fff;box-shadow:inset 0 1px 1px rgba(0,0,0,0.06);"></div>
<svg style="position:absolute;left:165.5px;top:430.70000000000005px;" width="18" height="11" viewBox="0 0 18 11"><path d="M1.5 1.5 L9 9 L16.5 1.5" fill="none" stroke="#6b6b6b" stroke-width="2.5" stroke-linecap="round" stroke-linejoin="round"/></svg>
<svg style="position:absolute;left:202px;top:421.9000000000001px;" width="29" height="27" viewBox="0 0 29 27"><defs><linearGradient id="fg5" x1="0" y1="0" x2="0" y2="1"><stop offset="0" stop-color="#88c6f7"/><stop offset="1" stop-color="#6ab3f0"/></linearGradient></defs><path d="M0.5 4 V1.8 Q0.5 0.5 1.8 0.5 H10.5 Q11.8 0.5 12.4 1.6 L13.2 3 H27.2 Q28.5 3 28.5 4.3 V8 H0.5 Z" fill="#3e8bd7"/><rect x="0.5" y="6.5" width="28" height="19" rx="1" fill="url(#fg5)"/><rect x="0.5" y="6.5" width="28" height="1.2" fill="#5aa5ea"/><rect x="0.5" y="23.8" width="28" height="2.7" rx="1" fill="#4b9be5"/><rect x="9" y="11" width="11" height="9" fill="none" stroke="#4b8fd6" stroke-width="1.6"/><path d="M9.5 19.5 L12.5 15.5 L15 18 L17 16 L19.5 19.5 Z" fill="#4b8fd6"/></svg>
<div class="t" style="left:243.00px;top:422.94px;font-size:27px;line-height:27px;color:#2f55c3;font-weight:400;letter-spacing:0.324px;-webkit-text-stroke:0.3px #2f55c3;">Pictures</div>
<svg style="position:absolute;left:858.7px;top:420.0px;" width="30" height="30" viewBox="0 0 30 30"><circle cx="15" cy="15" r="10.6" fill="none" stroke="#3a82f6" stroke-width="2.3"/><circle cx="15" cy="15" r="5.2" fill="#3a82f6"/><line x1="15" y1="1.5" x2="15" y2="4.5" stroke="#3a82f6" stroke-width="2.2"/><line x1="15" y1="25.5" x2="15" y2="28.5" stroke="#3a82f6" stroke-width="2.2"/><line x1="1.5" y1="15" x2="4.5" y2="15" stroke="#3a82f6" stroke-width="2.2"/><line x1="25.5" y1="15" x2="28.5" y2="15" stroke="#3a82f6" stroke-width="2.2"/></svg>
<div class="t" style="right:628.58px;text-align:right;top:422.94px;font-size:27px;line-height:27px;color:#2f55c3;font-weight:400;letter-spacing:-0.594px;-webkit-text-stroke:0.3px #2f55c3;">273,1 Mo</div>
<div style="position:absolute;left:0px;top:460.0px;width:1893px;height:48.24999999999996px;background:#2c54dc;"></div>
<div style="position:absolute;left:44px;top:468.70000000000005px;width:28px;height:28px;box-sizing:border-box;border-radius:6px;background:#fff;"></div>
<svg style="position:absolute;left:234px;top:470.0px;" width="30" height="28" viewBox="0 0 30 28"><rect x="4" y="0.5" width="22" height="3" rx="1" fill="#f0f0f0"/><rect x="5" y="1" width="20" height="1.2" fill="#9fcf3a"/><rect x="2" y="2.5" width="26" height="3" rx="1" fill="#f5f5f5"/><rect x="3" y="3.3" width="24" height="1.2" fill="#e8782a"/><rect x="0.5" y="5" width="29" height="22" rx="2.5" fill="#ffffff"/><ellipse cx="15" cy="12.6" rx="2.6" ry="4.2" fill="#f5a623" opacity="0.85" transform="rotate(0 15 16.8)"/><ellipse cx="15" cy="12.6" rx="2.6" ry="4.2" fill="#f8e71c" opacity="0.85" transform="rotate(45 15 16.8)"/><ellipse cx="15" cy="12.6" rx="2.6" ry="4.2" fill="#7ed321" opacity="0.85" transform="rotate(90 15 16.8)"/><ellipse cx="15" cy="12.6" rx="2.6" ry="4.2" fill="#3fb34f" opacity="0.85" transform="rotate(135 15 16.8)"/><ellipse cx="15" cy="12.6" rx="2.6" ry="4.2" fill="#4a90e2" opacity="0.85" transform="rotate(180 15 16.8)"/><ellipse cx="15" cy="12.6" rx="2.6" ry="4.2" fill="#9b59b6" opacity="0.85" transform="rotate(225 15 16.8)"/><ellipse cx="15" cy="12.6" rx="2.6" ry="4.2" fill="#d0021b" opacity="0.85" transform="rotate(270 15 16.8)"/><ellipse cx="15" cy="12.6" rx="2.6" ry="4.2" fill="#f56a2a" opacity="0.85" transform="rotate(315 15 16.8)"/></svg>
<div class="t" style="left:275.00px;top:470.74px;font-size:27px;line-height:27px;color:#ffffff;font-weight:400;letter-spacing:0.220px;-webkit-text-stroke:0.3px #ffffff;">Photos Library.photoslibrary</div>
<div class="t" style="right:628.58px;text-align:right;top:470.74px;font-size:27px;line-height:27px;color:#ffffff;font-weight:400;letter-spacing:-0.594px;-webkit-text-stroke:0.3px #ffffff;">273,1 Mo</div>
<svg style="position:absolute;left:762px;top:469px;" width="28" height="28" viewBox="0 0 28 28"><circle cx="14" cy="14" r="14" fill="#fff"/><path d="M4.5 14 Q14 2.5 23.5 14 Q14 25.5 4.5 14 Z" fill="#2c54dc"/><circle cx="14" cy="14" r="4.4" fill="#fff"/><circle cx="14" cy="14" r="1.9" fill="#2c54dc"/></svg>
<svg style="position:absolute;left:804px;top:469px;" width="28" height="28" viewBox="0 0 28 28"><circle cx="14" cy="14" r="14" fill="#fff"/><circle cx="12.5" cy="12" r="5.3" fill="none" stroke="#2c54dc" stroke-width="2.2"/><line x1="16.5" y1="16" x2="20.5" y2="20" stroke="#2c54dc" stroke-width="2.4" stroke-linecap="round"/></svg>
<div style="position:absolute;left:0px;top:508.04999999999995px;width:1893px;height:48.25000000000007px;background:#ffffff;"></div>
<div style="position:absolute;left:44px;top:516.75px;width:28px;height:28px;box-sizing:border-box;border:1.2px solid #c6c6c6;border-radius:6.5px;background:#fff;box-shadow:inset 0 1px 1px rgba(0,0,0,0.06);"></div>
<svg style="position:absolute;left:235px;top:516.9499999999999px;" width="26" height="29" viewBox="0 0 26 29"><defs><linearGradient id="dg" x1="0" y1="0" x2="0" y2="1"><stop offset="0" stop-color="#f7f7f7"/><stop offset="1" stop-color="#e9e9e9"/></linearGradient></defs><path d="M1 1 H17 L25 9 V28 H1 Z" fill="url(#dg)" stroke="#dcdcdc" stroke-width="1"/><path d="M17 1 V9 H25" fill="#ffffff" stroke="#d6d6d6" stroke-width="1"/></svg>
<div class="t" style="left:275.00px;top:518.79px;font-size:27px;line-height:27px;color:#5c5c5c;font-weight:400;letter-spacing:-0.193px;-webkit-text-stroke:0.3px #5c5c5c;">.DS_Store</div>
<div class="t" style="right:627.32px;text-align:right;top:518.79px;font-size:27px;line-height:27px;color:#5c5c5c;font-weight:400;letter-spacing:0.661px;-webkit-text-stroke:0.3px #5c5c5c;">8 ko</div>
<div style="position:absolute;left:0px;top:556.1px;width:1893px;height:48.24999999999996px;background:#f1f2f2;"></div>
<div style="position:absolute;left:44px;top:564.8000000000001px;width:28px;height:28px;box-sizing:border-box;border:1.2px solid #c6c6c6;border-radius:6.5px;background:#fff;box-shadow:inset 0 1px 1px rgba(0,0,0,0.06);"></div>
<svg style="position:absolute;left:235px;top:565.0px;" width="26" height="29" viewBox="0 0 26 29"><defs><linearGradient id="dg" x1="0" y1="0" x2="0" y2="1"><stop offset="0" stop-color="#f7f7f7"/><stop offset="1" stop-color="#e9e9e9"/></linearGradient></defs><path d="M1 1 H17 L25 9 V28 H1 Z" fill="url(#dg)" stroke="#dcdcdc" stroke-width="1"/><path d="M17 1 V9 H25" fill="#ffffff" stroke="#d6d6d6" stroke-width="1"/></svg>
<div class="t" style="left:276.00px;top:566.84px;font-size:27px;line-height:27px;color:#5c5c5c;font-weight:400;-webkit-text-stroke:0.3px #5c5c5c;">desktop.ini</div>
<div class="t" style="right:627.65px;text-align:right;top:566.84px;font-size:27px;line-height:27px;color:#5c5c5c;font-weight:400;letter-spacing:0.846px;-webkit-text-stroke:0.3px #5c5c5c;">504 octets</div>
<div style="position:absolute;left:0px;top:604.15px;width:1893px;height:48.24999999999996px;background:#ffffff;"></div>
<div style="position:absolute;left:44px;top:612.85px;width:28px;height:28px;box-sizing:border-box;border:1.2px solid #c6c6c6;border-radius:6.5px;background:#fff;box-shadow:inset 0 1px 1px rgba(0,0,0,0.06);"></div>
<svg style="position:absolute;left:202px;top:619.65px;" width="12" height="18" viewBox="0 0 12 18"><path d="M1.5 1.5 L9.5 8.5 L1.5 15.5" fill="none" stroke="#6b6b6b" stroke-width="2.5" stroke-linecap="round" stroke-linejoin="round"/></svg>
<svg style="position:absolute;left:234px;top:613.85px;" width="29" height="27" viewBox="0 0 29 27"><defs><linearGradient id="fg6" x1="0" y1="0" x2="0" y2="1"><stop offset="0" stop-color="#88c6f7"/><stop offset="1" stop-color="#6ab3f0"/></linearGradient></defs><path d="M0.5 4 V1.8 Q0.5 0.5 1.8 0.5 H10.5 Q11.8 0.5 12.4 1.6 L13.2 3 H27.2 Q28.5 3 28.5 4.3 V8 H0.5 Z" fill="#3e8bd7"/><rect x="0.5" y="6.5" width="28" height="19" rx="1" fill="url(#fg6)"/><rect x="0.5" y="6.5" width="28" height="1.2" fill="#5aa5ea"/><rect x="0.5" y="23.8" width="28" height="2.7" rx="1" fill="#4b9be5"/></svg>
<div class="t" style="left:276.00px;top:614.89px;font-size:27px;line-height:27px;color:#5c5c5c;font-weight:400;-webkit-text-stroke:0.3px #5c5c5c;">Camera Roll</div>
<svg style="position:absolute;left:858.7px;top:611.9499999999999px;" width="30" height="30" viewBox="0 0 30 30"><circle cx="15" cy="15" r="10.6" fill="none" stroke="#3a82f6" stroke-width="2.3"/><circle cx="15" cy="15" r="5.2" fill="#3a82f6"/><line x1="15" y1="1.5" x2="15" y2="4.5" stroke="#3a82f6" stroke-width="2.2"/><line x1="15" y1="25.5" x2="15" y2="28.5" stroke="#3a82f6" stroke-width="2.2"/><line x1="1.5" y1="15" x2="4.5" y2="15" stroke="#3a82f6" stroke-width="2.2"/><line x1="25.5" y1="15" x2="28.5" y2="15" stroke="#3a82f6" stroke-width="2.2"/></svg>
<div class="t" style="right:627.95px;text-align:right;top:614.89px;font-size:27px;line-height:27px;color:#5c5c5c;font-weight:400;letter-spacing:0.546px;-webkit-text-stroke:0.3px #5c5c5c;">190 octets</div>
<div style="position:absolute;left:0px;top:652.1999999999999px;width:1893px;height:48.25000000000007px;background:#f1f2f2;"></div>
<div style="position:absolute;left:44px;top:660.9px;width:28px;height:28px;box-sizing:border-box;border:1.2px solid #c6c6c6;border-radius:6.5px;background:#fff;box-shadow:inset 0 1px 1px rgba(0,0,0,0.06);"></div>
<svg style="position:absolute;left:202px;top:667.6999999999999px;" width="12" height="18" viewBox="0 0 12 18"><path d="M1.5 1.5 L9.5 8.5 L1.5 15.5" fill="none" stroke="#6b6b6b" stroke-width="2.5" stroke-linecap="round" stroke-linejoin="round"/></svg>
<svg style="position:absolute;left:235px;top:661.0999999999999px;" width="26" height="29" viewBox="0 0 26 29"><defs><linearGradient id="dg" x1="0" y1="0" x2="0" y2="1"><stop offset="0" stop-color="#f7f7f7"/><stop offset="1" stop-color="#e9e9e9"/></linearGradient></defs><path d="M1 1 H17 L25 9 V28 H1 Z" fill="url(#dg)" stroke="#dcdcdc" stroke-width="1"/><path d="M17 1 V9 H25" fill="#ffffff" stroke="#d6d6d6" stroke-width="1"/></svg>
<div class="t" style="left:277.00px;top:662.94px;font-size:27px;line-height:27px;color:#5c5c5c;font-weight:400;-webkit-text-stroke:0.3px #5c5c5c;">$RECYCLE.BIN</div>
<svg style="position:absolute;left:858.7px;top:659.9999999999999px;" width="30" height="30" viewBox="0 0 30 30"><circle cx="15" cy="15" r="10.6" fill="none" stroke="#3a82f6" stroke-width="2.3"/><circle cx="15" cy="15" r="5.2" fill="#3a82f6"/><line x1="15" y1="1.5" x2="15" y2="4.5" stroke="#3a82f6" stroke-width="2.2"/><line x1="15" y1="25.5" x2="15" y2="28.5" stroke="#3a82f6" stroke-width="2.2"/><line x1="1.5" y1="15" x2="4.5" y2="15" stroke="#3a82f6" stroke-width="2.2"/><line x1="25.5" y1="15" x2="28.5" y2="15" stroke="#3a82f6" stroke-width="2.2"/></svg>
<div class="t" style="right:627.95px;text-align:right;top:662.94px;font-size:27px;line-height:27px;color:#5c5c5c;font-weight:400;letter-spacing:0.546px;-webkit-text-stroke:0.3px #5c5c5c;">129 octets</div>
<div style="position:absolute;left:0px;top:700.25px;width:1893px;height:48.24999999999996px;background:#ffffff;"></div>
<div style="position:absolute;left:44px;top:708.95px;width:28px;height:28px;box-sizing:border-box;border:1.2px solid #c6c6c6;border-radius:6.5px;background:#fff;box-shadow:inset 0 1px 1px rgba(0,0,0,0.06);"></div>
<svg style="position:absolute;left:235px;top:709.15px;" width="26" height="29" viewBox="0 0 26 29"><defs><linearGradient id="dg" x1="0" y1="0" x2="0" y2="1"><stop offset="0" stop-color="#f7f7f7"/><stop offset="1" stop-color="#e9e9e9"/></linearGradient></defs><path d="M1 1 H17 L25 9 V28 H1 Z" fill="url(#dg)" stroke="#dcdcdc" stroke-width="1"/><path d="M17 1 V9 H25" fill="#ffffff" stroke="#d6d6d6" stroke-width="1"/></svg>
<div class="t" style="left:275.00px;top:710.99px;font-size:27px;line-height:27px;color:#5c5c5c;font-weight:400;letter-spacing:0.273px;-webkit-text-stroke:0.3px #5c5c5c;">.localized</div>
<div class="t" style="right:628.07px;text-align:right;top:710.99px;font-size:27px;line-height:27px;color:#5c5c5c;font-weight:400;letter-spacing:-0.086px;-webkit-text-stroke:0.3px #5c5c5c;">Zéro ko</div>
<div style="position:absolute;left:0px;top:748.3px;width:1893px;height:48.225000000000094px;background:#f1f2f2;"></div>
<div style="position:absolute;left:44px;top:757.0px;width:28px;height:28px;box-sizing:border-box;border:1.2px solid #c6c6c6;border-radius:6.5px;background:#fff;box-shadow:inset 0 1px 1px rgba(0,0,0,0.06);"></div>
<svg style="position:absolute;left:170px;top:763.8px;" width="12" height="18" viewBox="0 0 12 18"><path d="M1.5 1.5 L9.5 8.5 L1.5 15.5" fill="none" stroke="#6b6b6b" stroke-width="2.5" stroke-linecap="round" stroke-linejoin="round"/></svg>
<svg style="position:absolute;left:202px;top:758.0px;" width="29" height="27" viewBox="0 0 29 27"><defs><linearGradient id="fg7" x1="0" y1="0" x2="0" y2="1"><stop offset="0" stop-color="#88c6f7"/><stop offset="1" stop-color="#6ab3f0"/></linearGradient></defs><path d="M0.5 4 V1.8 Q0.5 0.5 1.8 0.5 H10.5 Q11.8 0.5 12.4 1.6 L13.2 3 H27.2 Q28.5 3 28.5 4.3 V8 H0.5 Z" fill="#3e8bd7"/><rect x="0.5" y="6.5" width="28" height="19" rx="1" fill="url(#fg7)"/><rect x="0.5" y="6.5" width="28" height="1.2" fill="#5aa5ea"/><rect x="0.5" y="23.8" width="28" height="2.7" rx="1" fill="#4b9be5"/><path d="M11 11 L14 13 L11 15 L8 13 Z M18 11 L21 13 L18 15 L15 13 Z M11 15.5 L14 17.5 L11 19.5 L8 17.5 Z M18 15.5 L21 17.5 L18 19.5 L15 17.5 Z" fill="#4b8fd6" transform="translate(0,-0.5)"/></svg>
<div class="t" style="left:243.00px;top:759.04px;font-size:27px;line-height:27px;color:#2f55c3;font-weight:400;letter-spacing:0.024px;-webkit-text-stroke:0.3px #2f55c3;">Dropbox</div>
<svg style="position:absolute;left:858.7px;top:756.0999999999999px;" width="30" height="30" viewBox="0 0 30 30"><circle cx="15" cy="15" r="10.6" fill="none" stroke="#3a82f6" stroke-width="2.3"/><circle cx="15" cy="15" r="5.2" fill="#3a82f6"/><line x1="15" y1="1.5" x2="15" y2="4.5" stroke="#3a82f6" stroke-width="2.2"/><line x1="15" y1="25.5" x2="15" y2="28.5" stroke="#3a82f6" stroke-width="2.2"/><line x1="1.5" y1="15" x2="4.5" y2="15" stroke="#3a82f6" stroke-width="2.2"/><line x1="25.5" y1="15" x2="28.5" y2="15" stroke="#3a82f6" stroke-width="2.2"/></svg>
<div class="t" style="right:628.28px;text-align:right;top:759.04px;font-size:27px;line-height:27px;color:#2f55c3;font-weight:400;letter-spacing:-0.294px;-webkit-text-stroke:0.3px #2f55c3;">209,1 Mo</div>
<div style="position:absolute;left:0px;top:796.325px;width:1893px;height:48.224999999999866px;background:#ffffff;"></div>
<div style="position:absolute;left:44px;top:805.0250000000001px;width:28px;height:28px;box-sizing:border-box;border:1.2px solid #c6c6c6;border-radius:6.5px;background:#fff;box-shadow:inset 0 1px 1px rgba(0,0,0,0.06);"></div>
<svg style="position:absolute;left:170px;top:811.825px;" width="12" height="18" viewBox="0 0 12 18"><path d="M1.5 1.5 L9.5 8.5 L1.5 15.5" fill="none" stroke="#6b6b6b" stroke-width="2.5" stroke-linecap="round" stroke-linejoin="round"/></svg>
<svg style="position:absolute;left:202px;top:806.0250000000001px;" width="29" height="27" viewBox="0 0 29 27"><defs><linearGradient id="fg8" x1="0" y1="0" x2="0" y2="1"><stop offset="0" stop-color="#88c6f7"/><stop offset="1" stop-color="#6ab3f0"/></linearGradient></defs><path d="M0.5 4 V1.8 Q0.5 0.5 1.8 0.5 H10.5 Q11.8 0.5 12.4 1.6 L13.2 3 H27.2 Q28.5 3 28.5 4.3 V8 H0.5 Z" fill="#3e8bd7"/><rect x="0.5" y="6.5" width="28" height="19" rx="1" fill="url(#fg8)"/><rect x="0.5" y="6.5" width="28" height="1.2" fill="#5aa5ea"/><rect x="0.5" y="23.8" width="28" height="2.7" rx="1" fill="#4b9be5"/><rect x="9" y="11" width="11" height="8" fill="none" stroke="#4b8fd6" stroke-width="1.6"/><rect x="12" y="19.5" width="5" height="1.5" fill="#4b8fd6"/></svg>
<div class="t" style="left:243.00px;top:807.07px;font-size:27px;line-height:27px;color:#2f55c3;font-weight:400;letter-spacing:0.545px;-webkit-text-stroke:0.3px #2f55c3;">Desktop</div>
<svg style="position:absolute;left:858.7px;top:804.125px;" width="30" height="30" viewBox="0 0 30 30"><circle cx="15" cy="15" r="10.6" fill="none" stroke="#3a82f6" stroke-width="2.3"/><circle cx="15" cy="15" r="5.2" fill="#3a82f6"/><line x1="15" y1="1.5" x2="15" y2="4.5" stroke="#3a82f6" stroke-width="2.2"/><line x1="15" y1="25.5" x2="15" y2="28.5" stroke="#3a82f6" stroke-width="2.2"/><line x1="1.5" y1="15" x2="4.5" y2="15" stroke="#3a82f6" stroke-width="2.2"/><line x1="25.5" y1="15" x2="28.5" y2="15" stroke="#3a82f6" stroke-width="2.2"/></svg>
<div class="t" style="right:628.21px;text-align:right;top:807.07px;font-size:27px;line-height:27px;color:#2f55c3;font-weight:400;letter-spacing:-0.223px;-webkit-text-stroke:0.3px #2f55c3;">192,2 Mo</div>
<div style="position:absolute;left:0px;top:844.3499999999999px;width:1893px;height:48.225000000000094px;background:#f1f2f2;"></div>
<div style="position:absolute;left:44px;top:853.05px;width:28px;height:28px;box-sizing:border-box;border:1.2px solid #c6c6c6;border-radius:6.5px;background:#fff;box-shadow:inset 0 1px 1px rgba(0,0,0,0.06);"></div>
<svg style="position:absolute;left:170px;top:859.8499999999999px;" width="12" height="18" viewBox="0 0 12 18"><path d="M1.5 1.5 L9.5 8.5 L1.5 15.5" fill="none" stroke="#6b6b6b" stroke-width="2.5" stroke-linecap="round" stroke-linejoin="round"/></svg>
<svg style="position:absolute;left:202px;top:854.05px;" width="29" height="27" viewBox="0 0 29 27"><defs><linearGradient id="fg9" x1="0" y1="0" x2="0" y2="1"><stop offset="0" stop-color="#88c6f7"/><stop offset="1" stop-color="#6ab3f0"/></linearGradient></defs><path d="M0.5 4 V1.8 Q0.5 0.5 1.8 0.5 H10.5 Q11.8 0.5 12.4 1.6 L13.2 3 H27.2 Q28.5 3 28.5 4.3 V8 H0.5 Z" fill="#3e8bd7"/><rect x="0.5" y="6.5" width="28" height="19" rx="1" fill="url(#fg9)"/><rect x="0.5" y="6.5" width="28" height="1.2" fill="#5aa5ea"/><rect x="0.5" y="23.8" width="28" height="2.7" rx="1" fill="#4b9be5"/><path d="M12 19.5 V12 L18 10.8 V18" fill="none" stroke="#4b8fd6" stroke-width="1.6"/><ellipse cx="11" cy="19.5" rx="2" ry="1.6" fill="#4b8fd6"/><ellipse cx="17" cy="18" rx="2" ry="1.6" fill="#4b8fd6"/></svg>
<div class="t" style="left:243.00px;top:855.09px;font-size:27px;line-height:27px;color:#4b7a17;font-weight:400;letter-spacing:0.499px;-webkit-text-stroke:0.3px #4b7a17;">Music</div>
<svg style="position:absolute;left:858.7px;top:852.1499999999999px;" width="30" height="30" viewBox="0 0 30 30"><circle cx="15" cy="15" r="10.6" fill="none" stroke="#3a82f6" stroke-width="2.3"/><circle cx="15" cy="15" r="5.2" fill="#3a82f6"/><line x1="15" y1="1.5" x2="15" y2="4.5" stroke="#3a82f6" stroke-width="2.2"/><line x1="15" y1="25.5" x2="15" y2="28.5" stroke="#3a82f6" stroke-width="2.2"/><line x1="1.5" y1="15" x2="4.5" y2="15" stroke="#3a82f6" stroke-width="2.2"/><line x1="25.5" y1="15" x2="28.5" y2="15" stroke="#3a82f6" stroke-width="2.2"/></svg>
<div class="t" style="right:627.98px;text-align:right;top:855.09px;font-size:27px;line-height:27px;color:#4b7a17;font-weight:400;-webkit-text-stroke:0.3px #4b7a17;">183,6 Mo</div>
<div style="position:absolute;left:0px;top:892.375px;width:1893px;height:48.225000000000094px;background:#ffffff;"></div>
<div style="position:absolute;left:44px;top:901.075px;width:28px;height:28px;box-sizing:border-box;border:1.2px solid #c6c6c6;border-radius:6.5px;background:#fff;box-shadow:inset 0 1px 1px rgba(0,0,0,0.06);"></div>
<svg style="position:absolute;left:170px;top:907.875px;" width="12" height="18" viewBox="0 0 12 18"><path d="M1.5 1.5 L9.5 8.5 L1.5 15.5" fill="none" stroke="#6b6b6b" stroke-width="2.5" stroke-linecap="round" stroke-linejoin="round"/></svg>
<svg style="position:absolute;left:203px;top:901.2750000000001px;" width="26" height="29" viewBox="0 0 26 29"><defs><linearGradient id="dg" x1="0" y1="0" x2="0" y2="1"><stop offset="0" stop-color="#f7f7f7"/><stop offset="1" stop-color="#e9e9e9"/></linearGradient></defs><path d="M1 1 H17 L25 9 V28 H1 Z" fill="url(#dg)" stroke="#dcdcdc" stroke-width="1"/><path d="M17 1 V9 H25" fill="#ffffff" stroke="#d6d6d6" stroke-width="1"/></svg>
<div class="t" style="left:243.00px;top:903.12px;font-size:27px;line-height:27px;color:#4b7a17;font-weight:400;letter-spacing:0.204px;-webkit-text-stroke:0.3px #4b7a17;">.dropbox</div>
<div class="t" style="right:627.98px;text-align:right;top:903.12px;font-size:27px;line-height:27px;color:#4b7a17;font-weight:400;-webkit-text-stroke:0.3px #4b7a17;">12 ko</div>
<div style="position:absolute;left:0px;top:940.4000000000001px;width:1893px;height:48.2px;background:#f1f2f2;"></div>
<div style="position:absolute;left:44px;top:949.1000000000001px;width:28px;height:28px;box-sizing:border-box;border:1.2px solid #c6c6c6;border-radius:6.5px;background:#fff;box-shadow:inset 0 1px 1px rgba(0,0,0,0.06);"></div>
<svg style="position:absolute;left:170px;top:955.9000000000001px;" width="12" height="18" viewBox="0 0 12 18"><path d="M1.5 1.5 L9.5 8.5 L1.5 15.5" fill="none" stroke="#6b6b6b" stroke-width="2.5" stroke-linecap="round" stroke-linejoin="round"/></svg>
<svg style="position:absolute;left:203px;top:949.3000000000002px;" width="26" height="29" viewBox="0 0 26 29"><defs><linearGradient id="dg" x1="0" y1="0" x2="0" y2="1"><stop offset="0" stop-color="#f7f7f7"/><stop offset="1" stop-color="#e9e9e9"/></linearGradient></defs><path d="M1 1 H17 L25 9 V28 H1 Z" fill="url(#dg)" stroke="#dcdcdc" stroke-width="1"/><path d="M17 1 V9 H25" fill="#ffffff" stroke="#d6d6d6" stroke-width="1"/></svg>
<div class="t" style="left:243.00px;top:951.14px;font-size:27px;line-height:27px;color:#4b7a17;font-weight:400;letter-spacing:0.678px;-webkit-text-stroke:0.3px #4b7a17;">.config</div>
<svg style="position:absolute;left:858.7px;top:948.2px;" width="30" height="30" viewBox="0 0 30 30"><circle cx="15" cy="15" r="10.6" fill="none" stroke="#3a82f6" stroke-width="2.3"/><circle cx="15" cy="15" r="5.2" fill="#3a82f6"/><line x1="15" y1="1.5" x2="15" y2="4.5" stroke="#3a82f6" stroke-width="2.2"/><line x1="15" y1="25.5" x2="15" y2="28.5" stroke="#3a82f6" stroke-width="2.2"/><line x1="1.5" y1="15" x2="4.5" y2="15" stroke="#3a82f6" stroke-width="2.2"/><line x1="25.5" y1="15" x2="28.5" y2="15" stroke="#3a82f6" stroke-width="2.2"/></svg>
<div class="t" style="right:627.89px;text-align:right;top:951.14px;font-size:27px;line-height:27px;color:#4b7a17;font-weight:400;letter-spacing:0.095px;-webkit-text-stroke:0.3px #4b7a17;">3,9 Mo</div>
<div style="position:absolute;left:0px;top:0px;width:1893px;height:55px;background:rgba(255,255,255,0.955);"></div>
<div style="position:absolute;left:0px;top:53.80000000000001px;width:1893px;height:1.5px;background:#dcdcdc;"></div>
</div>
<div style="position:absolute;left:434px;top:273.5px;width:1914px;height:1.5px;background:#e2e2e2;"></div>
<div style="position:absolute;left:467px;top:289px;width:28px;height:28px;box-sizing:border-box;border:1.2px solid #c8c8c8;border-radius:6.5px;background:#fff;"></div>
<div style="position:absolute;left:526.5px;top:287px;width:1px;height:31px;background:#e0e0e0;"></div>
<div class="t" style="left:571.70px;top:293.35px;font-size:22.5px;line-height:22.5px;color:#222;font-weight:400;letter-spacing:0.669px;-webkit-text-stroke:0.3px #222;">Nom</div>
<div style="position:absolute;left:1276.5px;top:287px;width:1px;height:31px;background:#e0e0e0;"></div>
<svg style="position:absolute;left:1292.7px;top:288px;" width="30" height="30" viewBox="0 0 30 30"><circle cx="15" cy="15" r="10.6" fill="none" stroke="#636363" stroke-width="2.3"/><circle cx="15" cy="15" r="5.2" fill="#636363"/><line x1="15" y1="1.5" x2="15" y2="4.5" stroke="#636363" stroke-width="2.2"/><line x1="15" y1="25.5" x2="15" y2="28.5" stroke="#636363" stroke-width="2.2"/><line x1="1.5" y1="15" x2="4.5" y2="15" stroke="#636363" stroke-width="2.2"/><line x1="25.5" y1="15" x2="28.5" y2="15" stroke="#636363" stroke-width="2.2"/></svg>
<div style="position:absolute;left:1337px;top:287px;width:1px;height:31px;background:#e0e0e0;"></div>
<div class="t" style="left:1354.90px;top:293.35px;font-size:22.5px;line-height:22.5px;color:#222;font-weight:700;letter-spacing:-0.048px;">Taille</div>
<svg style="position:absolute;left:1658px;top:298px;" width="18" height="11" viewBox="0 0 18 11"><path d="M1.5 1.5 L9 8.5 L16.5 1.5" fill="none" stroke="#6a6a6a" stroke-width="2" stroke-linecap="round" stroke-linejoin="round"/></svg>
<div style="position:absolute;left:1700px;top:287px;width:1px;height:31px;background:#e0e0e0;"></div>
<div class="t" style="left:1718.00px;top:292.76px;font-size:23.2px;line-height:23.2px;color:#222;font-weight:400;letter-spacing:0.050px;-webkit-text-stroke:0.3px #222;">Taille visualisée</div>
<div style="position:absolute;left:2324.5px;top:287px;width:1px;height:31px;background:#e6e6e6;"></div>
<div style="position:absolute;left:2327px;top:330px;width:21px;height:931px;background:#f7f7f7;"></div>
<div style="position:absolute;left:2326.5px;top:330px;width:1px;height:931px;background:#e4e4e4;"></div>
<div style="position:absolute;left:2334px;top:345.5px;width:16px;height:310px;background:#c1c1c1;border-radius:8px;"></div>
<div style="position:absolute;left:434px;top:1260.5px;width:1914px;height:30px;background:#f8f8f8;"></div>
<div style="position:absolute;left:434px;top:1260.5px;width:1893px;height:1.2px;background:#e0e0e0;"></div>
<div style="position:absolute;left:440px;top:1268px;width:1878px;height:16px;background:#c1c1c1;border-radius:8px;"></div>
<div style="position:absolute;left:434px;top:1290px;width:1914px;height:1.5px;background:#e3e3e3;"></div>
<div style="position:absolute;left:434px;top:1291.5px;width:1914px;height:81.5px;background:#fefefe;"></div>
<div style="position:absolute;left:2150px;top:1317px;width:166px;height:41px;box-sizing:border-box;border:1.2px solid #e5e5e5;border-radius:10px;background:#fefefe;box-shadow:0 1px 1px rgba(0,0,0,0.04);"></div>
<div class="t" style="left:2169.00px;top:1323.64px;font-size:27px;line-height:27px;color:#b9b9b9;font-weight:400;letter-spacing:0.031px;-webkit-text-stroke:0.3px #b9b9b9;">Supprimer</div>
<div style="position:absolute;left:752px;top:756px;width:456px;height:284px;box-sizing:border-box;border-radius:13px;background:#e9e9e9;border:1px solid #d3d3d3;box-shadow:0 10px 40px rgba(0,0,0,0.24),0 0 2px rgba(0,0,0,0.2);"></div>
<div class="t" style="left:779.10px;top:776.64px;font-size:27px;line-height:27px;color:#1e1e1e;font-weight:400;letter-spacing:0.143px;-webkit-text-stroke:0.3px #1e1e1e;">Sélection à supprimer</div>
<div class="t" style="left:778.10px;top:820.04px;font-size:27px;line-height:27px;color:#a9a9a9;font-weight:400;letter-spacing:0.279px;-webkit-text-stroke:0.3px #a9a9a9;">Effacer la sélection.</div>
<div style="position:absolute;left:780px;top:864.5px;width:400px;height:1.5px;background:#cbcbcb;"></div>
<div class="t" style="left:779.10px;top:886.74px;font-size:27px;line-height:27px;color:#a9a9a9;font-weight:400;letter-spacing:0.068px;-webkit-text-stroke:0.3px #a9a9a9;">Supprimer</div>
<div style="position:absolute;left:780px;top:930px;width:400px;height:1.5px;background:#cbcbcb;"></div>
<svg style="position:absolute;left:780px;top:950px;" width="28" height="28" viewBox="0 0 28 28"><circle cx="14" cy="14" r="14" fill="#474747"/><circle cx="12.5" cy="12.3" r="5" fill="none" stroke="#fff" stroke-width="2.2"/><line x1="16.3" y1="16" x2="20" y2="19.8" stroke="#fff" stroke-width="2.4" stroke-linecap="round"/></svg>
<div class="t" style="left:818.70px;top:951.84px;font-size:27px;line-height:27px;color:#1e1e1e;font-weight:400;letter-spacing:0.172px;-webkit-text-stroke:0.3px #1e1e1e;">Montrer sur Finder</div>
<div style="position:absolute;left:762px;top:985.8px;width:436px;height:44.5px;background:#6391f8;border-radius:8px;"></div>
<svg style="position:absolute;left:780px;top:994px;" width="28" height="28" viewBox="0 0 28 28"><circle cx="14" cy="14" r="14" fill="#e6edfd"/><path d="M4.5 14 Q14 2.5 23.5 14 Q14 25.5 4.5 14 Z" fill="#6391f8"/><circle cx="14" cy="14" r="4.4" fill="#e6edfd"/><circle cx="14" cy="14" r="1.9" fill="#6391f8"/></svg>
<div class="t" style="left:820.70px;top:995.84px;font-size:27px;line-height:27px;color:#ffffff;font-weight:400;letter-spacing:0.094px;-webkit-text-stroke:0.3px #ffffff;">Aperçu</div>
<div class="t" style="right:1170.83px;text-align:right;top:995.84px;font-size:27px;line-height:27px;color:#ffffff;font-weight:400;letter-spacing:-0.248px;-webkit-text-stroke:0.3px #ffffff;">Espace</div>
<div style="position:absolute;left:966px;top:1088px;width:827px;height:120px;box-sizing:border-box;border-radius:15px;background:#efefef;border:1.5px solid #dcdcdc;box-shadow:0 3px 14px rgba(0,0,0,0.10);"></div>
<svg style="position:absolute;left:1000px;top:1118px;" width="60" height="60" viewBox="0 0 60 60"><circle cx="30" cy="30" r="30" fill="#56c31b"/><path d="M19 31 L26.8 38.8 L41.8 23.5" fill="none" stroke="#fff" stroke-width="4.6" stroke-linecap="round" stroke-linejoin="round"/></svg>
<div class="t" style="left:1088.70px;top:1118.74px;font-size:25px;line-height:25px;color:#1e1e1e;font-weight:700;letter-spacing:0.066px;">Scan terminée</div>
<div class="t" style="left:1087.70px;top:1156.11px;font-size:23.5px;line-height:23.5px;color:#767676;font-weight:400;letter-spacing:0.006px;-webkit-text-stroke:0.3px #767676;">167506 fichiers/102,79 Go trouvés</div>
<svg style="position:absolute;left:1730px;top:1132.5px;" width="32" height="32" viewBox="0 0 32 32"><circle cx="16" cy="16" r="16" fill="#d7d7d7"/><path d="M10.5 10.5 L21.5 21.5 M21.5 10.5 L10.5 21.5" stroke="#4e4e4e" stroke-width="2.2" stroke-linecap="round"/></svg>
</body></html>
